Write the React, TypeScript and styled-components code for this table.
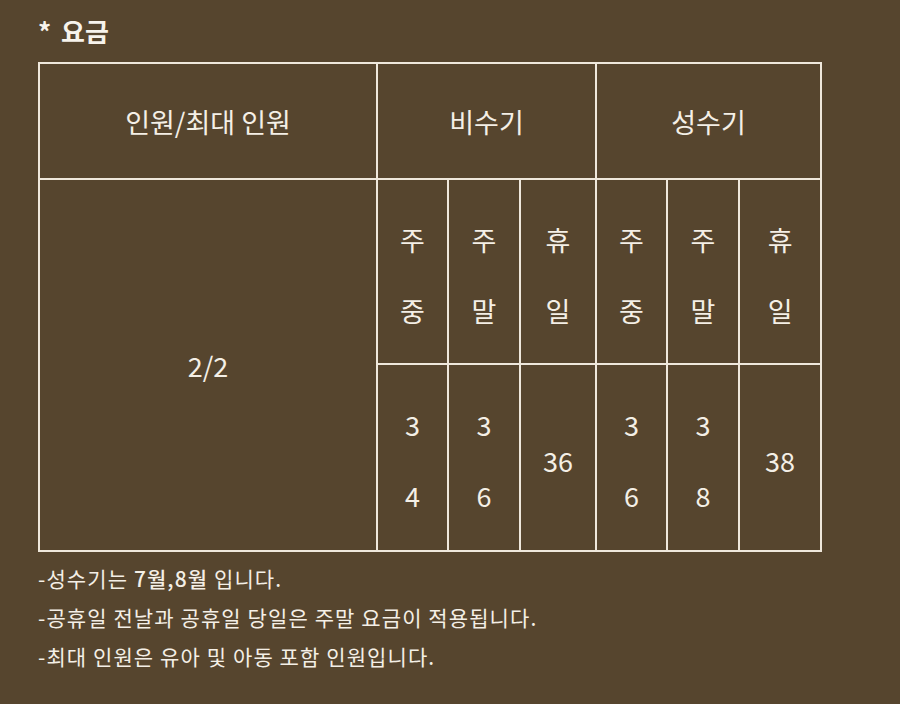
import React from "react";
import styled, { createGlobalStyle } from "styled-components";

const Global = createGlobalStyle`
  html, body { margin: 0; padding: 0; background: #56452e; }
  body { font-family: "Noto Sans CJK KR", "Noto Sans", sans-serif; color: #f4efe6; }
`;

const Page = styled.div`
  width: 900px;
  height: 704px;
  box-sizing: border-box;
  padding: 14px 0 0 38px;
  background: #56452e;
`;

const Title = styled.h2`
  margin: 0 0 14px 0;
  font-size: 26px;
  font-weight: 700;
  line-height: 34px;
  color: #f7f3ec;
`;

const Star = styled.span`
  margin-right: 4px;
`;

const Table = styled.table`
  border-collapse: collapse;
  width: 782px;
  table-layout: fixed;
`;

const Cell = styled.td<{ $h?: number; $shift?: number }>`
  border: 2px solid #efe8dc;
  text-align: center;
  vertical-align: middle;
  padding: ${(p) => (p.$shift ? `${p.$shift}px 0 0 0` : "0")};
  font-size: 27px;
  font-weight: 400;
  color: #f4efe6;
  height: ${(p) => (p.$h ? `${p.$h}px` : "auto")};
`;

const Stack = styled.div`
  display: flex;
  flex-direction: column;
  align-items: center;
  gap: 35px;
  line-height: 36px;
`;

const Num = styled.div`
  line-height: 36px;
`;

const Notes = styled.ul`
  list-style: none;
  margin: 12px 0 0 0;
  padding: 0;
  display: flex;
  flex-direction: column;
  gap: 10px;
`;

const Note = styled.li`
  font-size: 21px;
  line-height: 29px;
  letter-spacing: 1.1px;
  color: #f4efe6;
`;

const Strong = styled.strong`
  font-weight: 500;
`;

const widths = [338, 71, 72, 76, 71, 72, 82];

const labels = [
  ["주", "중"],
  ["주", "말"],
  ["휴", "일"],
  ["주", "중"],
  ["주", "말"],
  ["휴", "일"],
];

type Price = string[];
const prices: Price[] = [["3", "4"], ["3", "6"], ["36"], ["3", "6"], ["3", "8"], ["38"]];

export default function App() {
  return (
    <Page>
      <Global />
      <Title>
        <Star>*</Star> 요금
      </Title>
      <Table>
        <colgroup>
          {widths.map((w, i) => (
            <col key={i} style={{ width: w }} />
          ))}
        </colgroup>
        <tbody>
          <tr>
            <Cell $h={114}>인원/최대 인원</Cell>
            <Cell colSpan={3}>비수기</Cell>
            <Cell colSpan={3}>성수기</Cell>
          </tr>
          <tr>
            <Cell rowSpan={2}>2/2</Cell>
            {labels.map((l, i) => (
              <Cell key={i} $h={175} $shift={8}>
                <Stack>
                  <span>{l[0]}</span>
                  <span>{l[1]}</span>
                </Stack>
              </Cell>
            ))}
          </tr>
          <tr>
            {prices.map((p, i) => (
              <Cell key={i} $h={179} $shift={6}>
                {p.length > 1 ? (
                  <Stack>
                    <span>{p[0]}</span>
                    <span>{p[1]}</span>
                  </Stack>
                ) : (
                  <Num>{p[0]}</Num>
                )}
              </Cell>
            ))}
          </tr>
        </tbody>
      </Table>
      <Notes>
        <Note>
          -성수기는 <Strong>7월,8월</Strong> 입니다.
        </Note>
        <Note>-공휴일 전날과 공휴일 당일은 주말 요금이 적용됩니다.</Note>
        <Note>-최대 인원은 유아 및 아동 포함 인원입니다.</Note>
      </Notes>
    </Page>
  );
}
